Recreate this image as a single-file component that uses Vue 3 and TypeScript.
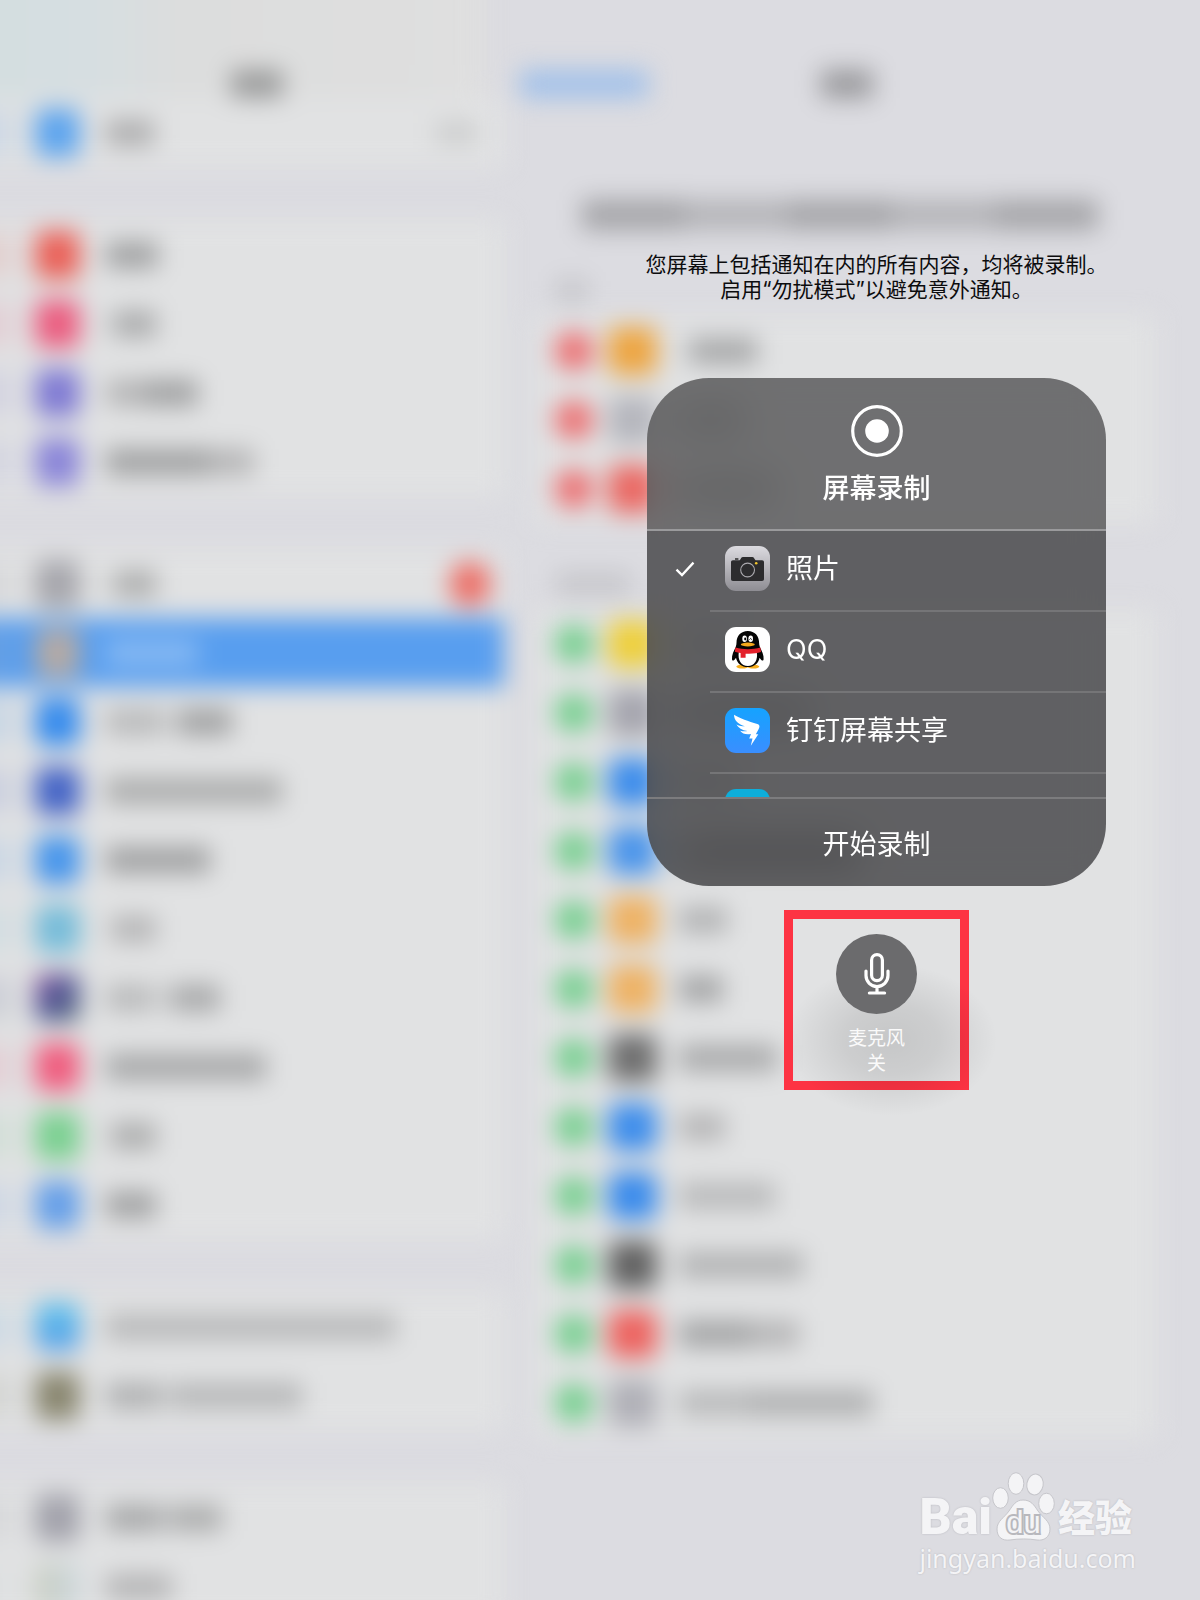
<script setup lang="ts">
import { ref } from 'vue'

interface Word {
  w: number
  a: number
}
interface Row {
  icon: string
  words: Word[]
  selected?: boolean
  badge?: boolean
  value?: boolean
}
interface Target {
  id: string
  name: string
  icon: 'camera' | 'qq' | 'ding' | 'plain'
}

const w = (width: number, a = 0.29): Word => ({ w: width, a })

const sidebar: Row[][] = [
  [{ icon: '#5ca4ee', words: [w(48, 0.23)], value: true }],
  [
    { icon: '#ea6057', words: [w(52)] },
    { icon: '#eb5c7f', words: [w(12, 0.12), w(38, 0.25)] },
    { icon: '#7f7ad3', words: [w(38, 0.2), w(54)] },
    { icon: '#8a85d8', words: [w(104), w(44, 0.2)] },
  ],
  [
    { icon: '#a6a6ac', words: [w(12, 0.1), w(38, 0.24)], badge: true },
    { icon: '#b5aaa4', words: [w(92)], selected: true },
    { icon: '#358bed', words: [w(58, 0.18), w(14, 0.03), w(54)] },
    { icon: '#4464c6', words: [w(176, 0.24)] },
    { icon: '#4695eb', words: [w(104)] },
    { icon: '#76bcd9', words: [w(8, 0.08), w(42, 0.2)] },
    { icon: 'linear-gradient(135deg, #98529a, #505698 45%, #5c6f78)', words: [w(46, 0.18), w(20, 0.06), w(48, 0.26)] },
    { icon: '#f05c7e', words: [w(160, 0.26)] },
    { icon: '#7ad090', words: [w(8, 0.1), w(42, 0.24)] },
    { icon: '#659fe8', words: [w(50)] },
  ],
  [
    { icon: 'linear-gradient(#5cc2ec, #589ee8)', words: [w(290, 0.18)] },
    { icon: '#89866f', words: [w(54, 0.22), w(12, 0.08), w(130, 0.19)] },
  ],
  [
    { icon: '#a2a2ab', words: [w(54, 0.26), w(12, 0.12), w(50, 0.24)] },
    { icon: 'linear-gradient(90deg, #c8cdbf, #cdd8df)', words: [w(66, 0.2)] },
  ],
]

const included: Row[] = [
  { icon: '#eda541', words: [w(12, 0.05), w(66, 0.26)] },
  { icon: '#b5b6bd', words: [w(64, 0.3)] },
  { icon: '#ea6964', words: [w(96, 0.3)] },
]
const more: Row[] = [
  { icon: '#eecf3c', words: [w(60, 0.16)] },
  { icon: '#a5a5ae', words: [w(130, 0.26)] },
  { icon: '#3d8deb', words: [w(60, 0.2)] },
  { icon: '#4b95ea', words: [w(180, 0.4)] },
  { icon: '#eeb264', words: [w(48, 0.21)] },
  { icon: '#eeb264', words: [w(44, 0.28)] },
  { icon: '#6f6f6f', words: [w(98, 0.25)] },
  { icon: '#3d8deb', words: [w(46, 0.2)] },
  { icon: '#3a8beb', words: [w(96, 0.18)] },
  { icon: '#626262', words: [w(124, 0.21)] },
  { icon: '#ed635f', words: [w(72, 0.28), w(48, 0.2)] },
  { icon: '#b0b0b7', words: [w(70, 0.18), w(124, 0.22)] },
]

const targets: Target[] = [
  { id: 'photos', name: '照片', icon: 'camera' },
  { id: 'qq', name: 'QQ', icon: 'qq' },
  { id: 'dingtalk', name: '钉钉屏幕共享', icon: 'ding' },
  { id: 'other', name: '', icon: 'plain' },
]
const chosen = ref('photos')
const micOn = ref(false)
</script>

<template>
  <div class="screen">
    <!-- Settings app, out of focus behind the control centre -->
    <div class="backdrop" aria-hidden="true">
      <div class="settings">
        <div class="side">
          <div class="bar side-bar"><span class="word title"></span></div>
          <div v-for="(group, g) in sidebar" :key="g" class="card side-card">
            <div v-for="(row, r) in group" :key="r" class="row" :class="{ selected: row.selected }">
              <span class="bleed" :style="{ background: row.icon }"></span>
              <span class="app" :style="{ background: row.icon }"></span>
              <span class="words">
                <span
                  v-for="(word, i) in row.words"
                  :key="i"
                  class="word"
                  :style="{ width: word.w + 'px', opacity: word.a }"
                ></span>
              </span>
              <span v-if="row.badge" class="badge"></span>
              <span v-if="row.value" class="word value"></span>
            </div>
          </div>
        </div>
        <div class="main">
          <div class="bar main-bar">
            <span class="word back"></span>
            <span class="word title"></span>
            <span class="back-space"></span>
          </div>
          <div class="notice">
            <span class="word"></span><span class="word mid"></span><span class="word"></span>
            <span class="word mid"></span><span class="word"></span>
          </div>
          <div class="section-label"><span class="word short"></span></div>
          <div class="card">
            <div v-for="(row, r) in included" :key="r" class="row control">
              <span class="dot remove"></span>
              <span class="app" :style="{ background: row.icon }"></span>
              <span class="words">
                <span
                  v-for="(word, i) in row.words"
                  :key="i"
                  class="word"
                  :style="{ width: word.w + 'px', opacity: word.a }"
                ></span>
              </span>
            </div>
          </div>
          <div class="section-label"><span class="word"></span></div>
          <div class="card">
            <div v-for="(row, r) in more" :key="r" class="row control">
              <span class="dot add"></span>
              <span class="app" :style="{ background: row.icon }"></span>
              <span class="words">
                <span
                  v-for="(word, i) in row.words"
                  :key="i"
                  class="word"
                  :style="{ width: word.w + 'px', opacity: word.a }"
                ></span>
              </span>
            </div>
          </div>
        </div>
      </div>
    </div>

    <main class="overlay">
      <p class="hint">您屏幕上包括通知在内的所有内容，均将被录制。<br />启用“勿扰模式”以避免意外通知。</p>

      <section class="panel">
        <header class="panel-head">
          <svg class="record" viewBox="0 0 52 52" aria-hidden="true">
            <circle cx="26" cy="26" r="24.3" fill="none" stroke="#fff" stroke-width="3.2" />
            <circle cx="26" cy="26" r="11.8" fill="#fff" />
          </svg>
          <h1>屏幕录制</h1>
        </header>

        <div class="targets" role="radiogroup">
          <label v-for="t in targets" :key="t.id" class="target">
            <input v-model="chosen" type="radio" name="target" :value="t.id" />
            <span class="tick">
              <svg v-if="chosen === t.id" viewBox="0 0 20 16" aria-hidden="true">
                <path d="M1.5 8.6 7 14 18.5 1.6" fill="none" stroke="#fff" stroke-width="2.3" />
              </svg>
            </span>
            <span class="target-body">
              <svg v-if="t.icon === 'camera'" class="logo" viewBox="0 0 45 45" aria-hidden="true">
                <defs>
                  <linearGradient id="cam" x1="0" y1="0" x2="0" y2="1">
                    <stop offset="0" stop-color="#dcdbe0" />
                    <stop offset="1" stop-color="#8e8d93" />
                  </linearGradient>
                </defs>
                <rect width="45" height="45" rx="11" fill="url(#cam)" />
                <path d="M10 12.2h3.400v1.500H10z" fill="#2c2c2e" />
                <path
                  d="M8 14.300h6.200c1.500 0 1.600-3.300 3.600-3.300h9.600c2 0 2.200 3.300 3.800 3.300H37c1.300 0 2 .8 2 2V33c0 1.300-.7 2-2 2H8c-1.300 0-2-.7-2-2V16.300c0-1.200.7-2 2-2z"
                  fill="#2c2c2e"
                />
                <circle cx="22.600" cy="24" r="6.900" fill="#2c2c2e" stroke="#aaa9ae" stroke-width="1.100" />
                <circle cx="31.200" cy="17.200" r="1.300" fill="#f3c62d" />
              </svg>
              <svg v-else-if="t.icon === 'qq'" class="logo" viewBox="0 0 45 45" aria-hidden="true">
                <rect width="45" height="45" rx="11" fill="#fff" />
                <ellipse cx="17.300" cy="39.600" rx="6" ry="2" fill="#f5ac1c" />
                <ellipse cx="28.300" cy="39.600" rx="6" ry="2" fill="#f5ac1c" />
                <path
                  d="M22.800 4C15.800 4 11.500 9 11.500 15.800c0 1.500-.2 2.700-.8 4.200-1.800 4.200-4.200 8-3.700 12.300.3 2.300 2.100 1.400 4-1.600C12 36.300 16.500 40 22.800 40s10.800-3.700 11.800-9.300c1.900 3 3.700 3.900 4 1.600.5-4.300-1.900-8.100-3.700-12.300-.6-1.500-.8-2.700-.8-4.200C34.100 9 29.800 4 22.800 4z"
                  fill="#050505"
                />
                <path d="M13.800 25h18c1.300 8-2.300 14-9 14s-10.300-6-9-14z" fill="#fff" />
                <ellipse cx="19.600" cy="11.800" rx="2.300" ry="3.200" fill="#fff" />
                <ellipse cx="25.700" cy="11.800" rx="2.300" ry="3.200" fill="#fff" />
                <ellipse cx="20.200" cy="12" rx="1" ry="1.400" fill="#050505" />
                <path d="M24.400 12.600q1.200-2.200 2.400 0" fill="none" stroke="#050505" stroke-width=".9" />
                <ellipse cx="22.800" cy="17.500" rx="7" ry="1.900" fill="#f5a81c" />
                <path
                  d="M10.400 20.500c8 2.200 17 2.200 25 0l.6 4.600c-4.300 1.400-9.600 2-15.400 1.600v4.100h-5v-4.900c-2-.2-4-.7-5.700-1.200z"
                  fill="#e3202b"
                />
              </svg>
              <svg v-else-if="t.icon === 'ding'" class="logo" viewBox="0 0 45 45" aria-hidden="true">
                <defs>
                  <linearGradient id="ding" x1="0" y1="0" x2="0" y2="1">
                    <stop offset="0" stop-color="#15a3ff" />
                    <stop offset="1" stop-color="#3a8eff" />
                  </linearGradient>
                </defs>
                <rect width="45" height="45" rx="11" fill="url(#ding)" />
                <path
                  d="M9 6.700c5.500 3.500 14.500 6.500 23.300 9.300 2 .7 2.600 1.800 1.900 3.700-.7 1.900-2 4.200-3.400 6.600h2.500l-7.500 11.500 1.700-7.300h-3.300l1.800-4.500c-5.200 1-8.600-.5-10.900-3.300 3.200.7 5.500.6 7.200.3-5.300-.9-9-3.200-10.900-6.600 3.200 1.400 6 1.900 8.500 1.900C13.500 16.200 9 12.500 9 6.700z"
                  fill="#fff"
                />
              </svg>
              <span v-else class="logo plain"></span>
              <span class="name">{{ t.name }}</span>
            </span>
          </label>
        </div>

        <button class="start" type="button">开始录制</button>
      </section>

      <div class="marked">
        <button class="mic" type="button" :aria-pressed="micOn" @click="micOn = !micOn">
          <span class="disc">
            <svg viewBox="0 0 26 42" aria-hidden="true">
              <g fill="none" stroke="#fff" stroke-width="3.200" stroke-linecap="round">
                <rect x="7.600" y="1.600" width="10.800" height="26" rx="5.400" />
                <path d="M2 18v4.600a11 11 0 0 0 22 0V18M13 33.600v6M5.400 40h15.200" />
              </g>
            </svg>
          </span>
          <span class="mic-label">麦克风<br />{{ micOn ? '开' : '关' }}</span>
        </button>
      </div>
    </main>

    <footer class="watermark">
      <div class="brand">
        <span class="bai">Bai</span>
        <svg class="paw" viewBox="0 0 64 70" aria-hidden="true">
          <g fill="#f4f4f6" stroke="#c6c6cb" stroke-width="1">
            <ellipse cx="8.500" cy="26" rx="7.800" ry="10.300" />
            <ellipse cx="24" cy="11.500" rx="7.800" ry="10.800" />
            <ellipse cx="43" cy="12.500" rx="8.200" ry="10.500" transform="rotate(10 43 12.500)" />
            <ellipse cx="54.500" cy="31.500" rx="7.800" ry="10.300" />
            <path
              d="M31 28c8 0 11 5 15 11 5 7 12 10 12 18 0 8-6 12-13 11-9-1.400-18-1.400-27 0C10 69 5 65 5 57c0-8 7-11 12-18 4-6 7-11 14-11z"
            />
          </g>
          <text x="31.500" y="61" text-anchor="middle">du</text>
        </svg>
        <span class="jingyan">经验</span>
      </div>
      <div class="url">jingyan.baidu.com</div>
    </footer>
  </div>
</template>

<style>
body {
  margin: 0;
  background: #dcdce1;
}
</style>

<style scoped>
.screen {
  position: relative;
  min-height: 100vh;
  overflow: hidden;
  background: #dcdce1;
  font-family: Inter, 'Noto Sans CJK SC', sans-serif;
}
.backdrop {
  position: absolute;
  inset: 0;
  overflow: hidden;
}
.settings {
  display: flex;
  filter: blur(12px);
}
.side {
  width: 42%;
}
.main {
  flex: 1;
  padding: 0 44px 0 30px;
}
.bar {
  display: flex;
  align-items: flex-end;
  box-sizing: border-box;
  height: 98px;
}
.side-bar {
  justify-content: center;
  margin: -60px 20px 0 -40px;
  height: 158px;
  padding-left: 70px;
  background: linear-gradient(90deg, #d3dee0, #d6dee1 25%, #dcdddd 42%, #dfdfdf);
}
.main-bar {
  justify-content: space-between;
  margin-left: -14px;
}
.back-space {
  width: 110px;
}
.word {
  height: 26px;
  background: #000;
}
.title {
  width: 52px;
  height: 28px;
  opacity: 0.3;
}
.back {
  width: 128px;
  height: 28px;
  background: #98bceb;
  opacity: 0.85;
}
.notice {
  display: flex;
  align-items: flex-end;
  box-sizing: border-box;
  height: 132px;
  padding: 0 58px 0 48px;
}
.notice .word {
  flex: 1;
  height: 30px;
  opacity: 0.25;
}
.notice .mid {
  opacity: 0.18;
}
.section-label {
  display: flex;
  align-items: flex-end;
  box-sizing: border-box;
  height: 86px;
  padding: 0 22px 14px;
}
.section-label .word {
  width: 74px;
  height: 22px;
  opacity: 0.1;
}
.section-label .short {
  width: 32px;
}
.card {
  background: #e1e2e3;
}
.side-card {
  margin: 0 0 53px -40px;
}
.row {
  display: flex;
  align-items: center;
  height: 69px;
}
.side-card .row {
  padding-right: 14px;
}
.bleed {
  width: 54px;
  height: 44px;
  margin-right: 21px;
  opacity: 0.14;
}
.app {
  width: 45px;
  height: 48px;
  border-radius: 8px;
}
.words {
  display: flex;
  margin-left: 26px;
}
.selected {
  background: #589eef;
}
.selected .word {
  background: #fff;
}
.badge {
  width: 40px;
  height: 44px;
  margin-left: auto;
  border-radius: 18px;
  background: #ec6e66;
}
.value {
  width: 40px;
  height: 20px;
  margin-left: auto;
  margin-right: 14px;
  opacity: 0.1;
}
.dot {
  width: 38px;
  height: 38px;
  margin: 0 15px 0 21px;
  border-radius: 16px;
}
.control .app {
  width: 49px;
}
.control .words {
  margin-left: 22px;
}
.remove {
  background: #ec7072;
}
.add {
  background: #76cf8f;
}

.overlay {
  position: relative;
  display: flex;
  flex-direction: column;
  align-items: center;
  width: 459px;
  margin-left: auto;
  margin-right: 94px;
  padding-top: 252px;
}
.hint {
  margin: 0 0 76px;
  font-size: 21px;
  line-height: 25px;
  text-align: center;
  white-space: nowrap;
  color: #0c0c0e;
}
.panel {
  align-self: stretch;
  overflow: hidden;
  border-radius: 62px;
  color: #fff;
  backdrop-filter: blur(16px);
}
.panel-head {
  display: flex;
  flex-direction: column;
  align-items: center;
  box-sizing: border-box;
  height: 153px;
  padding-top: 27px;
  border-bottom: 2px solid #9a9a9c;
  background: rgba(82, 82, 84, 0.8);
}
.record {
  width: 52px;
  height: 52px;
}
h1 {
  margin: 16px 0 0;
  font-size: 27px;
  line-height: 32px;
  font-weight: 500;
}
.targets {
  height: 266px;
  overflow: hidden;
  background: rgba(64, 64, 66, 0.8);
}
.target {
  display: flex;
  height: 81px;
}
.target input {
  position: absolute;
  opacity: 0;
}
.tick {
  display: flex;
  justify-content: flex-end;
  width: 48px;
  margin-right: 15px;
}
.tick svg {
  width: 20px;
  height: 16px;
  margin-top: 30px;
}
.target-body {
  display: flex;
  flex: 1;
  box-sizing: border-box;
  padding: 15px 0 0 15px;
  border-bottom: 2px solid #757577;
}
.logo {
  width: 45px;
  height: 45px;
}
.plain {
  border-radius: 11px;
  background: #0eaeda;
}
.name {
  margin-left: 16px;
  font-size: 27px;
  line-height: 45px;
}
.start {
  display: block;
  width: 100%;
  height: 89px;
  padding: 0;
  border: 0;
  border-top: 2px solid #7c7c7e;
  background: rgba(64, 64, 66, 0.8);
  color: #fff;
  font: inherit;
  font-size: 27px;
}
.marked {
  display: flex;
  justify-content: center;
  box-sizing: border-box;
  width: 185px;
  height: 180px;
  margin-top: 24px;
  padding-top: 15px;
  border: 9px solid #fd3343;
}
.mic {
  position: relative;
  z-index: 0;
  display: flex;
  flex-direction: column;
  align-items: center;
  height: 142px;
  padding: 0;
  border: 0;
  background: none;
  color: #fafafa;
  font: inherit;
}
.mic::before {
  content: '';
  position: absolute;
  inset: 30px -80px -40px -50px;
  z-index: -1;
  background: radial-gradient(closest-side, rgba(0, 0, 0, 0.12), rgba(0, 0, 0, 0.09) 45%, transparent);
}
.disc {
  display: flex;
  align-items: center;
  justify-content: center;
  width: 81px;
  height: 81px;
  border-radius: 50%;
  background: #6b6b6d;
}
.disc svg {
  width: 26px;
  height: 42px;
}
.mic-label {
  margin-top: 12px;
  font-size: 19px;
  line-height: 25px;
}

.watermark {
  position: absolute;
  right: 64px;
  bottom: 26px;
  color: #f4f4f6;
  text-shadow: 0 0 2px #b4b4ba;
}
.brand {
  display: flex;
  align-items: flex-end;
  height: 72px;
}
.bai {
  font: 900 50px/50px Roboto, sans-serif;
}
.paw {
  width: 64px;
  height: 70px;
}
.paw text {
  font: 31px 'Liberation Sans', sans-serif;
  fill: #f4f4f6;
  stroke: #b8b8bd;
  stroke-width: 4px;
  paint-order: stroke;
  text-shadow: none;
}
.jingyan {
  margin-left: 2px;
  font-size: 37px;
  line-height: 46px;
  font-weight: 900;
}
.url {
  font: 25px/32px 'Noto Sans', sans-serif;
}
</style>
